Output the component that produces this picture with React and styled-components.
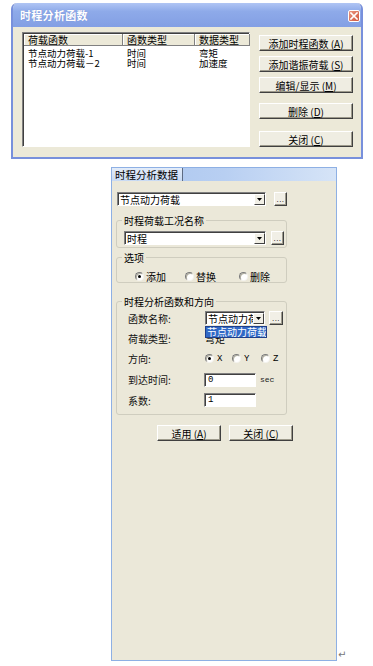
import React from "react";
import styled, { createGlobalStyle } from "styled-components";

const Global = createGlobalStyle`
  html, body { margin: 0; padding: 0; background: #ffffff; }
  body {
    font-family: "Noto Sans CJK SC", "Noto Sans", sans-serif;
    font-size: 10px;
    color: #000;
  }
  #root { width: 373px; height: 666px; overflow: hidden; }
`;

const Page = styled.div`
  width: 373px;
  height: 666px;
  box-sizing: border-box;
  padding: 3px 0 0 11px;
  display: flex;
  flex-direction: column;
`;

/* ---------- top dialog ---------- */
const Dialog = styled.div`
  width: 352px;
  height: 156px;
  box-sizing: border-box;
  border: 2px solid #7890dc;
  border-top: none;
  border-radius: 6px 6px 0 0;
  background: #ece9d8;
  display: flex;
  flex-direction: column;
  overflow: hidden;
`;

const TitleBar = styled.div`
  height: 24px;
  flex: none;
  display: flex;
  align-items: center;
  justify-content: space-between;
  padding: 0 1px 0 7px;
  background: linear-gradient(180deg, #b0c5f4 0%, #8eaae9 35%, #839fe4 100%);
`;

const Title = styled.span`
  color: #fff;
  font-size: 11px;
  font-weight: bold;
  letter-spacing: 0.3px;
  text-shadow: 0 0 1px #6a84cc;
`;

const CloseBtn = styled.div`
  width: 12px;
  height: 12px;
  margin-top: 2px;
  box-sizing: border-box;
  border: 1px solid #fff;
  border-radius: 2px;
  background: linear-gradient(135deg, #e9967f, #d2583f);
  display: flex;
  align-items: center;
  justify-content: center;
`;

const DialogBody = styled.div`
  flex: 1;
  display: flex;
  gap: 9px;
  padding: 5px 8px 0 9px;
`;

const ListBox = styled.div`
  width: 228px;
  height: 115px;
  box-sizing: border-box;
  background: #fff;
  border: 1px solid;
  border-color: #808080 #ffffff #ffffff #808080;
  box-shadow: inset 1px 1px #404040;
  padding: 1px 0 0 1px;
`;

const ListGrid = styled.div`
  display: grid;
  grid-template-columns: 99px 72px 55px;
`;

const HeadCell = styled.div`
  height: 12px;
  line-height: 12px;
  box-sizing: border-box;
  padding-left: 4px;
  background: #ece9d8;
  border-right: 1px solid #808080;
  border-bottom: 1px solid #808080;
  box-shadow: inset 1px 1px #ffffff;
  white-space: nowrap;
`;

const RowCell = styled.div`
  height: 10px;
  line-height: 10px;
  font-size: 9.5px;
  padding-left: 4px;
  margin-top: ${(p) => p.$mt || 0}px;
  white-space: nowrap;
`;

const ButtonColumn = styled.div`
  display: flex;
  flex-direction: column;
  padding-top: 3px;
`;

const Btn = styled.div`
  width: ${(p) => p.$w || 94}px;
  height: 16px;
  margin-top: ${(p) => p.$mt || 0}px;
  box-sizing: border-box;
  background: #efede2;
  border: 1px solid;
  border-color: #ffffff #404040 #404040 #ffffff;
  box-shadow: inset -1px -1px #9d9a8c;
  display: flex;
  align-items: center;
  justify-content: center;
  font-size: 10px;
  white-space: nowrap;
  & u { text-decoration: underline; }
`;

/* ---------- lower panel ---------- */
const PanelRow = styled.div`
  display: flex;
  align-items: flex-end;
  margin: 8px 0 0 100px;
`;

const Panel = styled.div`
  width: 226px;
  height: 494px;
  box-sizing: border-box;
  border: 1px solid #8eb0e4;
  background: #ebe8d9;
  display: flex;
  flex-direction: column;
`;

const TabStrip = styled.div`
  height: 13px;
  flex: none;
  display: flex;
  background: linear-gradient(90deg, #a9c5ee 0%, #b8cff2 50%, #d6e4f7 100%);
`;

const Tab = styled.div`
  width: 71px;
  box-sizing: border-box;
  padding-left: 3px;
  font-size: 10.5px;
  line-height: 13px;
  background: linear-gradient(180deg, #e3ecf9, #c8daf3);
  border-right: 1px solid #5d6b82;
  white-space: nowrap;
`;

const PanelBody = styled.div`
  padding: 11px 0 0 4px;
  display: flex;
  flex-direction: column;
`;

const ControlRow = styled.div`
  display: flex;
  align-items: center;
  gap: ${(p) => p.$gap || 5}px;
  margin-left: ${(p) => p.$ml || 0}px;
  position: relative;
`;

const Combo = styled.div`
  width: ${(p) => p.$w}px;
  height: 14px;
  box-sizing: border-box;
  background: #fff;
  border: 1px solid;
  border-color: #808080 #ffffff #ffffff #808080;
  box-shadow: inset 1px 1px #404040;
  display: flex;
  align-items: center;
  justify-content: space-between;
  padding: 1px 0 0 2px;
`;

const ComboText = styled.span`
  font-size: 10px;
  line-height: 12px;
  white-space: nowrap;
  overflow: ${(p) => (p.$clip ? "hidden" : "visible")};
`;

const ComboArrow = styled.div`
  width: 11px;
  height: 11px;
  flex: none;
  box-sizing: border-box;
  background: #f1efe6;
  border: 1px solid;
  border-color: #ffffff #404040 #404040 #ffffff;
  display: flex;
  align-items: center;
  justify-content: center;
`;

const DotsBtn = styled.div`
  width: ${(p) => p.$w || 13}px;
  height: 14px;
  flex: none;
  box-sizing: border-box;
  background: #f1efe6;
  border: 1px solid;
  border-color: #ffffff #404040 #404040 #ffffff;
  box-shadow: inset -1px -1px #9d9a8c;
  font-family: "Liberation Sans", sans-serif;
  font-size: 8px;
  line-height: 14px;
  text-align: center;
  letter-spacing: 0.5px;
`;

const Group = styled.fieldset`
  width: 171px;
  box-sizing: border-box;
  margin: ${(p) => p.$mt}px 0 0 0;
  padding: 0;
  min-width: 0;
  border: 1px solid #cfcdbf;
  border-radius: 3px;
`;

const Legend = styled.legend`
  margin-left: 5px;
  padding: 0 2px;
  font-size: 10px;
  line-height: 13px;
  height: 13px;
  white-space: nowrap;
`;

const GroupInner = styled.div`
  padding: ${(p) => p.$pad};
`;

const RadioRow = styled.div`
  display: grid;
  grid-template-columns: ${(p) => p.$cols};
  align-items: center;
  height: 12px;
`;

const RadioItem = styled.div`
  display: flex;
  align-items: center;
  gap: 2px;
  white-space: nowrap;
`;

const RadioDot = styled.span`
  width: 9px;
  height: 9px;
  flex: none;
  box-sizing: border-box;
  border-radius: 50%;
  background: #fff;
  border: 1px solid;
  border-color: #7a7a7a #f4f3ee #f4f3ee #7a7a7a;
  box-shadow: inset 1px 1px #b0ae9f;
  display: flex;
  align-items: center;
  justify-content: center;
  &::after {
    content: "";
    width: 3px;
    height: 3px;
    border-radius: 50%;
    background: ${(p) => (p.$on ? "#000" : "transparent")};
  }
`;

const AxisText = styled.span`
  font-family: "Liberation Mono", monospace;
  font-size: 9px;
  margin-left: 1px;
`;

const FormGrid = styled.div`
  display: grid;
  grid-template-columns: 77px auto;
  grid-template-rows: 20px 20px 21px 21px 20px;
  align-items: center;
  padding: 0 0 4px 11px;
`;

const FieldLabel = styled.span`
  font-size: 10px;
  color: #111;
  white-space: nowrap;
`;

const Value = styled.span`
  font-size: 10px;
  margin-top: 1px;
`;

const DropList = styled.div`
  position: absolute;
  left: 0;
  top: 15px;
  width: 62px;
  height: 12px;
  box-sizing: border-box;
  background: #3169c6;
  border: 1px solid #1f3f8a;
  color: #fff;
  font-size: 10px;
  line-height: 10px;
  padding-left: 1px;
  white-space: nowrap;
  overflow: hidden;
  z-index: 2;
`;

const TextInput = styled.div`
  width: 52px;
  height: 14px;
  box-sizing: border-box;
  background: #fff;
  border: 1px solid;
  border-color: #808080 #ffffff #ffffff #808080;
  box-shadow: inset 1px 1px #404040;
  padding: 1px 0 0 3px;
  font-family: "Liberation Mono", monospace;
  font-size: 9px;
  line-height: 11px;
  margin-left: -1px;
`;

const Unit = styled.span`
  font-family: "Liberation Mono", monospace;
  font-size: 8px;
  color: #222;
`;

const BottomButtons = styled.div`
  display: flex;
  gap: 8px;
  margin: 10px 0 0 41px;
`;

const ReturnMark = styled.span`
  font-family: "DejaVu Sans", sans-serif;
  font-size: 10px;
  line-height: 10px;
  color: #777;
  margin: 0 0 1px 1px;
`;

const Tri = () => (
  <svg width="5" height="3" viewBox="0 0 5 3">
    <path d="M0 0H5L2.5 3Z" fill="#000" />
  </svg>
);

const XIcon = () => (
  <svg width="8" height="8" viewBox="0 0 8 8">
    <path d="M1 1L7 7M7 1L1 7" stroke="#fff" strokeWidth="1.6" strokeLinecap="square" />
  </svg>
);

const Radio = ({ on, children, axis }) => (
  <RadioItem>
    <RadioDot $on={on} />
    {axis ? <AxisText>{children}</AxisText> : <span>{children}</span>}
  </RadioItem>
);

export default function App() {
  return (
    <>
      <Global />
      <Page>
        <Dialog>
          <TitleBar>
            <Title>时程分析函数</Title>
            <CloseBtn>
              <XIcon />
            </CloseBtn>
          </TitleBar>
          <DialogBody>
            <ListBox>
              <ListGrid>
                <HeadCell>荷载函数</HeadCell>
                <HeadCell>函数类型</HeadCell>
                <HeadCell>数据类型</HeadCell>
                <RowCell $mt={2}>节点动力荷载-1</RowCell>
                <RowCell $mt={2}>时间</RowCell>
                <RowCell $mt={2}>弯矩</RowCell>
                <RowCell>节点动力荷载－2</RowCell>
                <RowCell>时间</RowCell>
                <RowCell>加速度</RowCell>
              </ListGrid>
            </ListBox>
            <ButtonColumn>
              <Btn>添加时程函数 (<u>A</u>)</Btn>
              <Btn $mt={5}>添加谐振荷载 (<u>S</u>)</Btn>
              <Btn $mt={5}>编辑/显示 (<u>M</u>)</Btn>
              <Btn $mt={10}>删除 (<u>D</u>)</Btn>
              <Btn $mt={12}>关闭 (<u>C</u>)</Btn>
            </ButtonColumn>
          </DialogBody>
        </Dialog>

        <PanelRow>
          <Panel>
            <TabStrip>
              <Tab>时程分析数据</Tab>
            </TabStrip>
            <PanelBody>
              <ControlRow $gap={8} $ml={1}>
                <Combo $w={149}>
                  <ComboText>节点动力荷载</ComboText>
                  <ComboArrow>
                    <Tri />
                  </ComboArrow>
                </Combo>
                <DotsBtn>...</DotsBtn>
              </ControlRow>

              <Group $mt={8}>
                <Legend>时程荷载工况名称</Legend>
                <GroupInner $pad="4px 0 2px 7px">
                  <ControlRow $gap={5}>
                    <Combo $w={142}>
                      <ComboText>时程</ComboText>
                      <ComboArrow>
                        <Tri />
                      </ComboArrow>
                    </Combo>
                    <DotsBtn>...</DotsBtn>
                  </ControlRow>
                </GroupInner>
              </Group>

              <Group $mt={3}>
                <Legend>选项</Legend>
                <GroupInner $pad="5px 0 1px 18px">
                  <RadioRow $cols="50px 54px auto">
                    <Radio on>添加</Radio>
                    <Radio>替换</Radio>
                    <Radio>删除</Radio>
                  </RadioRow>
                </GroupInner>
              </Group>

              <Group $mt={12}>
                <Legend>时程分析函数和方向</Legend>
                <FormGrid>
                  <FieldLabel>函数名称:</FieldLabel>
                  <ControlRow $gap={4}>
                    <Combo $w={60}>
                      <ComboText $clip>节点动力荷</ComboText>
                      <ComboArrow>
                        <Tri />
                      </ComboArrow>
                    </Combo>
                    <DotsBtn $w={14}>...</DotsBtn>
                    <DropList>节点动力荷载</DropList>
                  </ControlRow>

                  <FieldLabel>荷载类型:</FieldLabel>
                  <Value>弯矩</Value>

                  <FieldLabel>方向:</FieldLabel>
                  <RadioRow $cols="27px 29px auto">
                    <Radio on axis>X</Radio>
                    <Radio axis>Y</Radio>
                    <Radio axis>Z</Radio>
                  </RadioRow>

                  <FieldLabel>到达时间:</FieldLabel>
                  <ControlRow $gap={4}>
                    <TextInput>0</TextInput>
                    <Unit>sec</Unit>
                  </ControlRow>

                  <FieldLabel>系数:</FieldLabel>
                  <TextInput>1</TextInput>
                </FormGrid>
              </Group>

              <BottomButtons>
                <Btn $w={64}>适用 (<u>A</u>)</Btn>
                <Btn $w={64}>关闭 (<u>C</u>)</Btn>
              </BottomButtons>
            </PanelBody>
          </Panel>
          <ReturnMark>↵</ReturnMark>
        </PanelRow>
      </Page>
    </>
  );
}
